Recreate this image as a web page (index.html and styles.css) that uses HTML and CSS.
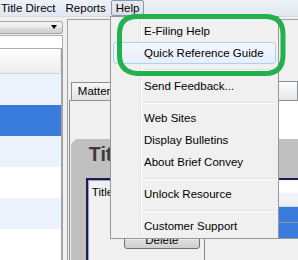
FILE: index.html
```html
<!DOCTYPE html>
<html lang="en">

<head>
    <meta charset="UTF-8">
    <meta name="viewport" content="width=device-width, initial-scale=1.0">
    <title>Brief Convey - Help</title>
    <link rel="stylesheet" href="styles.css">
</head>

<body>
    <div class="menubar">
        <div class="menubar-item">Title Direct</div>
        <div class="menubar-item">Reports</div>
        <div class="menubar-item open">Help</div>
    </div>

    <div class="app">
        <div class="sidebar">
            <div class="combo"><span class="combo-arrow"></span></div>
            <div class="field"></div>
            <div class="list">
                <div class="list-head"></div>
                <div class="list-row alt"></div>
                <div class="list-row selected"></div>
                <div class="list-row alt"></div>
                <div class="list-row"></div>
                <div class="list-row alt"></div>
                <div class="list-row"></div>
            </div>
        </div>
        <div class="splitter"></div>
        <div class="main">
            <div class="tabs">
                <div class="tab">Matter</div>
                <div class="tab current"></div>
            </div>
            <div class="tab-page">
                <div class="page-top">
                    <div class="page-top-box"></div>
                </div>
                <div class="group">
                    <div class="group-title">Title</div>
                    <div class="inner">
                        <div class="form">
                            <div class="form-label">Title</div>
                            <button class="button">Delete</button>
                        </div>
                        <div class="grid">
                            <div class="grid-head"></div>
                            <div class="grid-row"></div>
                            <div class="grid-row"></div>
                        </div>
                    </div>
                </div>
            </div>
        </div>
    </div>

    <div class="dropdown">
        <div class="dropdown-item">E-Filing Help</div>
        <div class="dropdown-item hover">Quick Reference Guide</div>
        <div class="dropdown-sep first"></div>
        <div class="dropdown-item">Send Feedback...</div>
        <div class="dropdown-sep"></div>
        <div class="dropdown-item">Web Sites</div>
        <div class="dropdown-item">Display Bulletins</div>
        <div class="dropdown-item">About Brief Convey</div>
        <div class="dropdown-sep"></div>
        <div class="dropdown-item">Unlock Resource</div>
        <div class="dropdown-sep"></div>
        <div class="dropdown-item">Customer Support</div>
    </div>

    <svg class="highlight-mark" width="298" height="260" viewBox="0 0 298 260">
        <path d="M137 16.5 H265 Q283 16.5 283 34 V55 Q283 73.5 265 73.5 H137 Q119.5 72 119.5 55 V34 Q119.5 16.5 137 16.5 Z"
            fill="none" stroke="#22b14c" stroke-width="5" />
    </svg>
</body>

</html>
```

FILE: styles.css
```css
* {
    margin: 0;
    padding: 0;
    box-sizing: border-box;
}

body {
    width: 298px;
    height: 260px;
    overflow: hidden;
    position: relative;
    background: #f0f0f0;
    color: #000;
    font-family: 'Liberation Sans', Arial, sans-serif;
    font-size: 11.5px;
}

/* top menu bar */
.menubar {
    height: 17px;
    display: flex;
    background: linear-gradient(#edf1f7, #e2e8f1);
    border-bottom: 1px solid #d4dae3;
}

.menubar-item {
    height: 16px;
    line-height: 14px;
    padding: 0 4px;
    border: 1px solid transparent;
    white-space: nowrap;
}

.menubar-item:first-child {
    margin-left: -4px;
}

.menubar-item.open {
    border-color: #8c97a6;
    border-radius: 2px;
    background: linear-gradient(#e6eaf0, #d9dee6);
}

/* application behind the menu */
.app {
    display: flex;
    height: 243px;
}

.sidebar {
    width: 64px;
    display: flex;
    flex-direction: column;
}

.combo {
    margin-top: 4px;
    width: 63px;
    height: 18px;
    display: flex;
    justify-content: flex-end;
    align-items: center;
    padding-right: 5px;
    border: 1px solid #a7a7a7;
    border-left: none;
    border-radius: 0 3px 3px 0;
    background: linear-gradient(#f3f3f3, #ebebeb 48%, #dcdcdc 52%, #d0d0d0);
}

.combo-arrow {
    width: 0;
    height: 0;
    border-left: 3.5px solid transparent;
    border-right: 3.5px solid transparent;
    border-top: 4px solid #000;
}

.field {
    margin-top: 1px;
    width: 63px;
    height: 20px;
    background: #fff;
    border: 1px solid #abadb3;
    border-left: none;
}

.list {
    flex: 1;
    background: #fff;
    border-right: 2px solid #a3a3a3;
}

.list-head {
    height: 25px;
    border-bottom: 1px solid #d5d5d5;
    border-right: 1px solid #e3e3e3;
    background: linear-gradient(#ffffff, #f6f6f6 50%, #ececec);
}

.list-row {
    height: 31px;
}

.list-row.alt {
    background: #ecf3fd;
}

.list-row.selected {
    background: #3a7cdc;
}

.splitter {
    width: 4px;
}

.main {
    width: 240px;
    margin-top: 2px;
    border-top: 1px solid #a0a0a0;
    border-left: 1px solid #a0a0a0;
    display: flex;
    flex-direction: column;
}

.tabs {
    margin-top: 60px;
    height: 20px;
    padding-left: 3px;
    display: flex;
    align-items: flex-end;
}

.tab {
    height: 18px;
    line-height: 17px;
    padding: 0 6px;
    border: 1px solid #8c8e94;
    border-bottom: none;
    background: linear-gradient(#f6f6f6, #ededed 50%, #e1e1e1);
}

.tab.current {
    margin-left: auto;
    width: 21px;
    height: 19px;
    background: linear-gradient(#fbfbfb, #f3f3f3 50%, #e6e6e6);
}

.tab-page {
    flex: 1;
    margin-left: 1px;
    border-top: 1px solid #8c8e94;
    border-left: 1px solid #8c8e94;
    display: flex;
    flex-direction: column;
}

.page-top {
    height: 38px;
    display: flex;
    justify-content: flex-end;
}

.page-top-box {
    width: 90px;
    background: #fff;
}

.group {
    flex: 1;
    margin-left: 1px;
    padding-left: 15px;
    display: flex;
    flex-direction: column;
    background: #c0c0c0;
    clip-path: polygon(5px 0, 100% 0, 100% 100%, 0 100%, 0 5px);
}

.group-title {
    height: 39px;
    padding: 4px 0 0 3px;
    line-height: 22px;
    font-size: 19.5px;
    font-weight: bold;
    color: #3c3c3c;
    white-space: nowrap;
}

.inner {
    flex: 1;
    display: flex;
    background: #f0f0f0;
    border-top: 2px solid #1d1d4d;
    border-left: 2px solid #1d1d4d;
    box-shadow: inset 1px 1px 0 #9a9cc0;
}

.form {
    width: 116px;
    padding: 5px 0 0 4px;
}

.form-label {
    line-height: 14px;
}

.button {
    display: block;
    margin: 32px 0 0 32px;
    width: 76px;
    height: 18px;
    line-height: 16px;
    font: inherit;
    border: 1px solid #707070;
    border-radius: 3px;
    background: linear-gradient(#f2f2f2, #ebebeb 48%, #dddddd 52%, #cfcfcf);
}

.grid {
    flex: 1;
    border-left: 1px solid #828790;
}

.grid-head {
    height: 27px;
    border-bottom: 1px solid #d5d5d5;
    background: linear-gradient(#ffffff, #ffffff 45%, #f4f6f9 50%, #eceff3);
}

.grid-row {
    height: 16px;
    background: #3a7cdc;
    border-bottom: 1px solid #8f9aa8;
}

/* Help drop-down */
.dropdown {
    position: absolute;
    left: 110px;
    top: 16px;
    width: 169px;
    height: 223px;
    padding: 3px 2px 1px;
    background: #f0f0f0;
    border: 1px solid #979797;
}

.dropdown::before {
    content: "";
    position: absolute;
    left: 29px;
    top: 2px;
    bottom: 2px;
    width: 1px;
    background: #e2e3e3;
    border-right: 1px solid #fff;
    box-sizing: content-box;
}

.dropdown-item {
    position: relative;
    height: 22px;
    line-height: 20px;
    padding-left: 30px;
    border: 1px solid transparent;
    border-radius: 3px;
    white-space: nowrap;
}

.dropdown-item.hover {
    border-color: #b2cff2;
    background: linear-gradient(#f3f7fd, #e6eefb);
}

.dropdown-sep {
    height: 10px;
    margin-left: 28px;
    padding-top: 5px;
}

.dropdown-sep.first {
    height: 11px;
}

.dropdown-sep::after {
    content: "";
    display: block;
    height: 1px;
    background: #e0e0e0;
    border-bottom: 1px solid #fff;
    box-sizing: content-box;
}

.highlight-mark {
    position: absolute;
    left: 0;
    top: 0;
    pointer-events: none;
}
```
